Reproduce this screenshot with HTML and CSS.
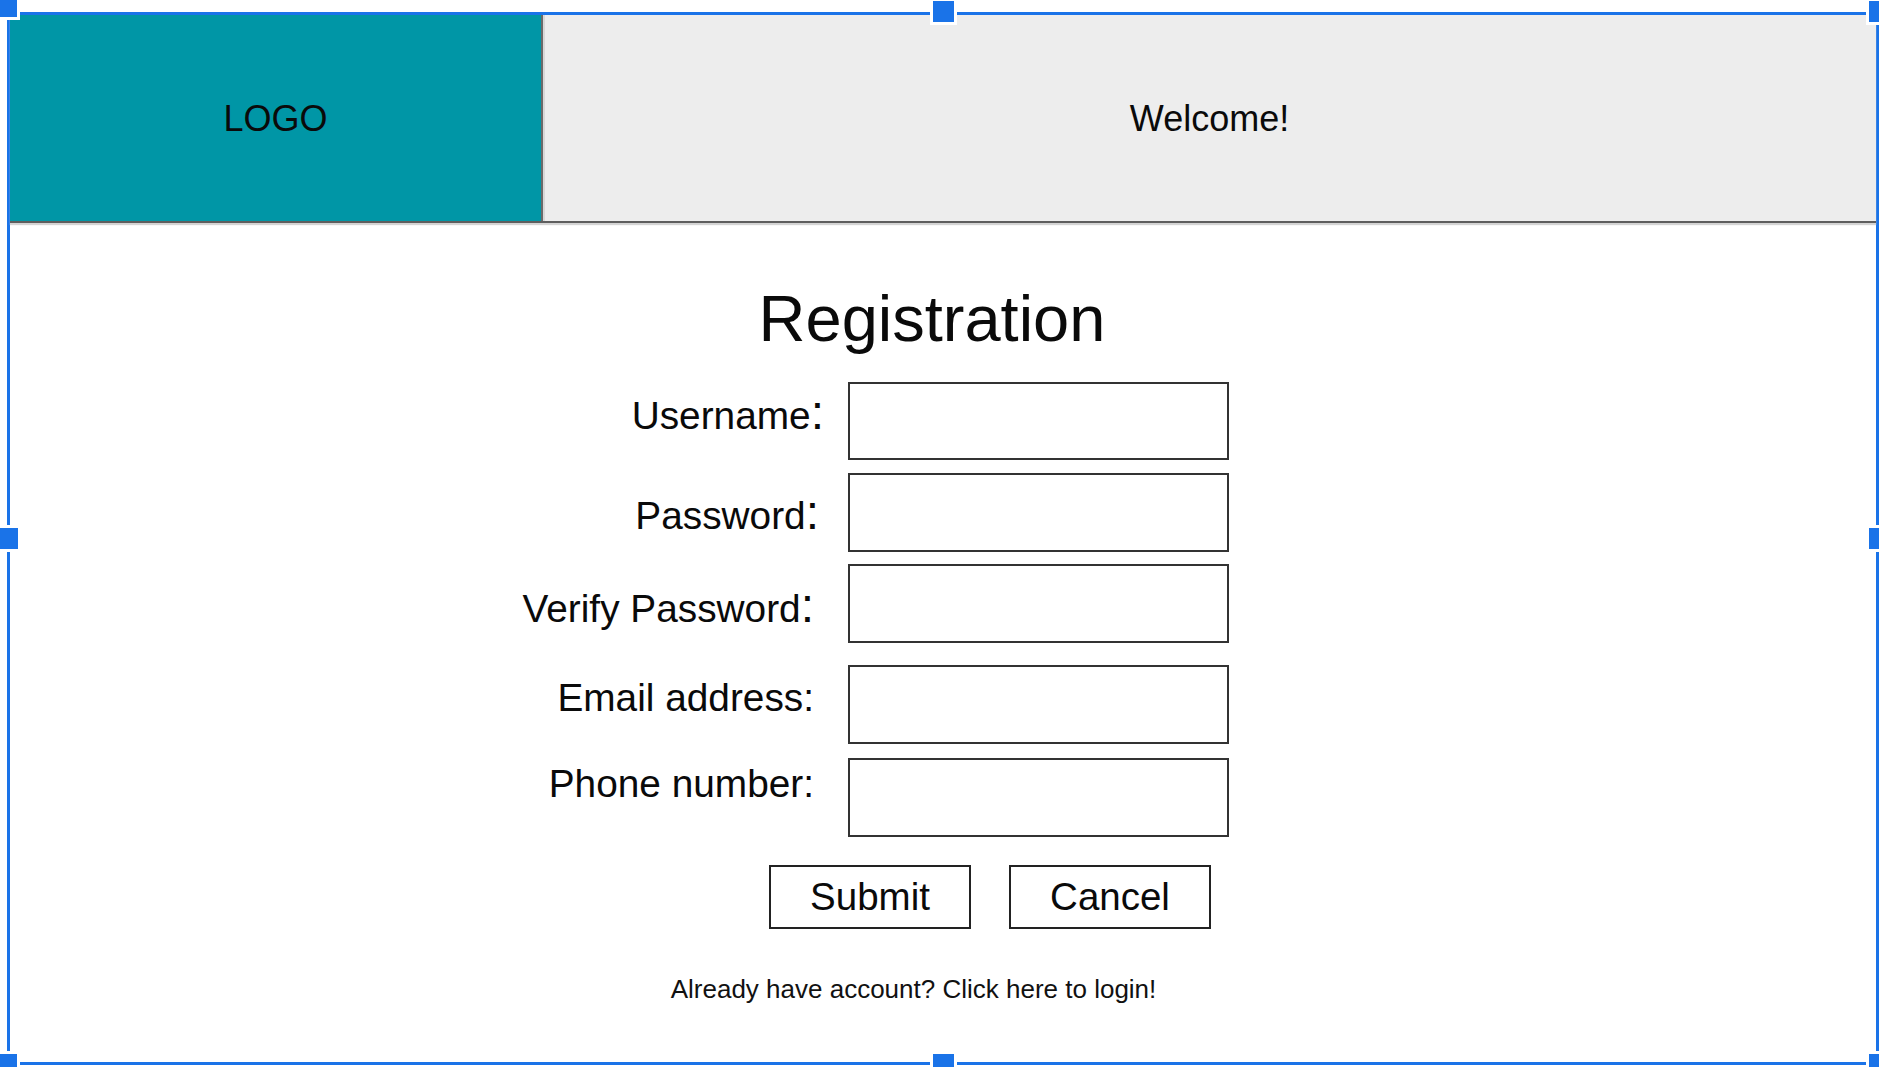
FILE: index.html
```html
<!DOCTYPE html>
<html lang="en">
<head>
<meta charset="utf-8">
<title>Registration</title>
<link rel="stylesheet" href="styles.css">
</head>
<body>
<div class="frame">
  <header class="header">
    <div class="logo">LOGO</div>
    <div class="welcome">Welcome!</div>
  </header>
  <main class="main">
    <h1 class="title">Registration</h1>
    <form class="form">
      <div class="row row-user">
        <label class="label label-user">Username<span class="big-colon">:</span></label>
        <input class="field field-first" type="text">
      </div>
      <div class="row row-pass">
        <label class="label label-pass">Password<span class="big-colon">:</span></label>
        <input class="field" type="password">
      </div>
      <div class="row row-verify">
        <label class="label label-verify">Verify Password<span class="big-colon">:</span></label>
        <input class="field" type="password">
      </div>
      <div class="row row-email">
        <label class="label label-email">Email address:</label>
        <input class="field" type="text">
      </div>
      <div class="row row-phone">
        <label class="label label-phone">Phone number:</label>
        <input class="field" type="text">
      </div>
      <div class="buttons">
        <button type="button" class="btn">Submit</button>
        <button type="button" class="btn">Cancel</button>
      </div>
    </form>
    <p class="login-note">Already have account? Click here to login!</p>
  </main>
</div>
<span class="handle h-tl"></span>
<span class="handle h-tc"></span>
<span class="handle h-tr"></span>
<span class="handle h-ml"></span>
<span class="handle h-mr"></span>
<span class="handle h-bl"></span>
<span class="handle h-bc"></span>
<span class="handle h-br"></span>
</body>
</html>
```
FILE: styles.css
```css
html, body {
  margin: 0;
  padding: 0;
  background: #ffffff;
  overflow: hidden;
}
body {
  position: relative;
  width: 1879px;
  height: 1067px;
  font-family: "Liberation Sans", Arial, sans-serif;
  color: #111111;
}
.frame {
  box-sizing: border-box;
  margin: 12px 0 0 7px;
  width: 1872px;
  height: 1053px;
  border: 3px solid #1a73e8;
  background: #ffffff;
  display: flex;
  flex-direction: column;
}
.header {
  display: flex;
  height: 208px;
  box-sizing: border-box;
  border-bottom: 2px solid #5e5e5e;
  box-shadow: 0 2px 1px #d4d4d4;
  flex: none;
}
.logo {
  width: 531px;
  flex: none;
  background: #0096a6;
  border-right: 2px solid #6a6a6a;
  display: flex;
  align-items: center;
  justify-content: center;
  font-size: 36px;
  color: #0a0a0a;
  padding-top: 1px;
}
.welcome {
  flex: 1;
  background: #ededed;
  box-shadow: inset 2px 0 0 #d8d8d8;
  display: flex;
  align-items: center;
  justify-content: center;
  font-size: 36px;
  color: #0a0a0a;
  padding-top: 1px;
}
.main {
  display: flex;
  flex-direction: column;
}
.title {
  margin: 64px 0 0 0;
  padding-right: 22px;
  text-align: center;
  font-weight: normal;
  font-size: 65px;
  line-height: 64px;
  color: #0a0a0a;
}
.form {
  margin: 31px 0 0 411px;
  display: flex;
  flex-direction: column;
}
.row {
  display: flex;
  align-items: flex-start;
  gap: 34px;
}
.row-pass { margin-top: 13px; }
.row-verify { margin-top: 12px; }
.row-email { margin-top: 22px; }
.row-phone { margin-top: 14px; }
.label {
  width: 393px;
  flex: none;
  text-align: right;
  font-size: 38.8px;
  line-height: 38px;
  color: #0a0a0a;
  white-space: nowrap;
}
.big-colon {
  font-size: 48px;
  line-height: 0;
}
.label-user { padding-top: 15px; margin-right: -10px; padding-left: 10px; }
.label-pass { padding-top: 24px; margin-right: -5px; padding-left: 5px; }
.label-verify { padding-top: 26px; }
.label-email { padding-top: 14px; }
.label-phone { padding-top: 7px; }
.field {
  box-sizing: border-box;
  width: 381px;
  height: 79px;
  border: 2px solid #333333;
  background: #ffffff;
  margin: 0;
  padding: 0 8px;
  font-family: inherit;
  font-size: 24px;
  outline: none;
}
.field-first { height: 78px; }
.buttons {
  display: flex;
  gap: 38px;
  margin: 28px 0 0 348px;
}
.btn {
  box-sizing: border-box;
  width: 202px;
  height: 64px;
  border: 2px solid #222222;
  background: #ffffff;
  padding: 0;
  font-family: inherit;
  font-size: 38.5px;
  line-height: 1;
  color: #0a0a0a;
  border-radius: 0;
}
.login-note {
  margin: 47px 0 0 0;
  padding-right: 59px;
  text-align: center;
  font-size: 26px;
  line-height: 26px;
  color: #111111;
}
.handle {
  position: absolute;
  width: 21px;
  height: 21px;
  background: #1a73e8;
  box-shadow: 0 0 0 3px #ffffff;
}
.h-tl { left: 0; top: 0; width: 17px; height: 17px; }
.h-tc { left: 933px; top: 1px; }
.h-tr { left: 1869px; top: 1px; }
.h-ml { left: -3px; top: 528px; }
.h-mr { left: 1869px; top: 528px; }
.h-bl { left: 0; top: 1054px; width: 17px; }
.h-bc { left: 933px; top: 1054px; }
.h-br { left: 1869px; top: 1054px; }
```
